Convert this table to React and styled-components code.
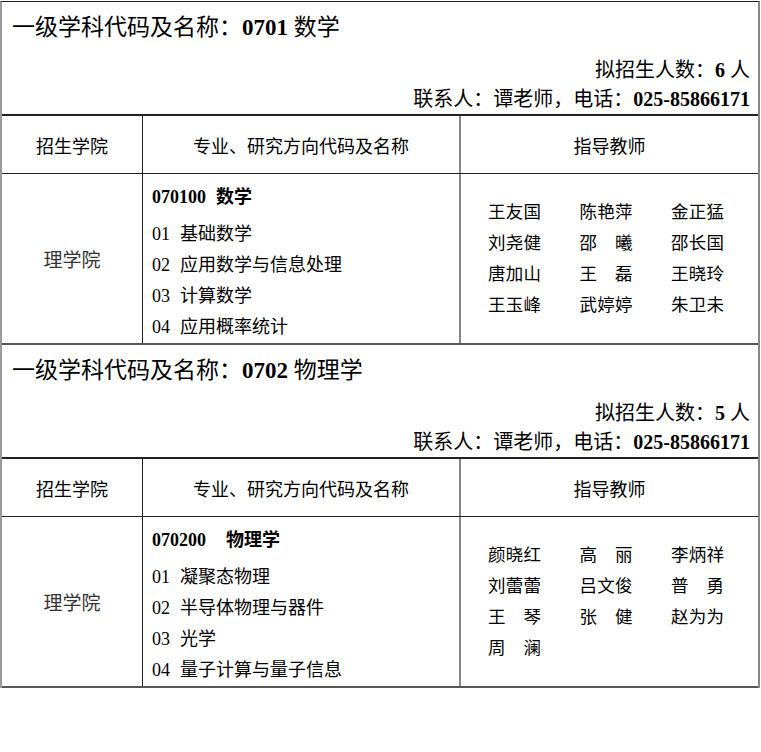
import styled, { createGlobalStyle } from 'styled-components'

const GlobalStyle = createGlobalStyle`
  body {
    margin: 0;
    background: #fff;
    color: #000;
    font-family: "Liberation Serif", "Noto Sans CJK SC", serif;
  }
`

const Sheet = styled.div`
  width: 760px;
  box-sizing: border-box;
  margin-top: 1px;
  border-top: 1px solid #222;
  border-left: 2px solid #9a9a9a;
  border-right: 2px solid #888;
`

const Head = styled.div`
  height: 112px;
  border-bottom: 2px solid #222;
  display: flex;
  flex-direction: column;
  justify-content: space-between;
  padding: 0 8px 0 10px;
`

const Title = styled.div`
  margin-top: 11px;
  font-size: 23px;
  line-height: 30px;
`

const Meta = styled.div`
  text-align: right;
  font-size: 20px;
  line-height: 29px;
`

const Num = styled.b`
  font-weight: 700;
`

const Row = styled.div`
  display: grid;
  grid-template-columns: 141px 318px 1fr;
  height: ${p => p.$height}px;
  border-bottom: ${p => p.$line}px solid ${p => p.$lineColor || '#222'};
`

const dividers = {
  dark: '1px solid #222',
  gray: '2px solid #888',
}

const Cell = styled.div`
  display: flex;
  align-items: center;
  justify-content: center;
  font-size: 18px;
  border-right: ${p => dividers[p.$divider] || 'none'};
`

const College = styled(Cell)`
  font-size: 19px;
  color: #333;
`

const Programs = styled.div`
  border-right: 2px solid #888;
  padding: 8px 0 0 9px;
  font-size: 18px;
`

const Major = styled.div`
  font-weight: 700;
  line-height: 30px;
  margin-bottom: 7px;
`

const MajorName = styled.span`
  margin-left: ${p => p.$gap}px;
`

const Direction = styled.div`
  line-height: 31px;
  display: flex;
`

const DirNo = styled.span`
  width: 28px;
`

const Teachers = styled.div`
  padding: 22.5px 0 0 27px;
  display: grid;
  grid-template-columns: repeat(3, 53px);
  column-gap: 38.5px;
  align-content: start;
  font-size: 17.5px;
  line-height: 31px;
`

const Name = styled.span`
  display: flex;
  justify-content: space-between;
`

const sections = [
  {
    code: '0701',
    name: '数学',
    quota: '6',
    major: { code: '070100', name: '数学', gap: 10 },
    directions: ['基础数学', '应用数学与信息处理', '计算数学', '应用概率统计'],
    teachers: ['王友国', '陈艳萍', '金正猛', '刘尧健', '邵曦', '邵长国', '唐加山', '王磊', '王晓玲', '王玉峰', '武婷婷', '朱卫未'],
  },
  {
    code: '0702',
    name: '物理学',
    quota: '5',
    major: { code: '070200', name: '物理学', gap: 20 },
    directions: ['凝聚态物理', '半导体物理与器件', '光学', '量子计算与量子信息'],
    teachers: ['颜晓红', '高丽', '李炳祥', '刘蕾蕾', '吕文俊', '普勇', '王琴', '张健', '赵为为', '周澜'],
  },
]

const Section = ({ s }) => (
  <>
    <Head>
      <Title>
        一级学科代码及名称：<Num>{s.code}</Num> {s.name}
      </Title>
      <div>
        <Meta>
          拟招生人数：<Num>{s.quota}</Num> 人
        </Meta>
        <Meta>
          联系人：谭老师，电话：<Num>025-85866171</Num>
        </Meta>
      </div>
    </Head>
    <Row $height={57} $line={1}>
      <Cell $divider="dark">招生学院</Cell>
      <Cell $divider="gray">专业、研究方向代码及名称</Cell>
      <Cell>指导教师</Cell>
    </Row>
    <Row $height={169} $line={2} $lineColor="#555">
      <College $divider="dark">理学院</College>
      <Programs>
        <Major>
          {s.major.code}
          <MajorName $gap={s.major.gap}>{s.major.name}</MajorName>
        </Major>
        {s.directions.map((d, i) => (
          <Direction key={d}>
            <DirNo>0{i + 1}</DirNo>
            {d}
          </Direction>
        ))}
      </Programs>
      <Teachers>
        {s.teachers.map(t => (
          <Name key={t}>
            {t.split('').map((c, i) => (
              <span key={i}>{c}</span>
            ))}
          </Name>
        ))}
      </Teachers>
    </Row>
  </>
)

export default function App() {
  return (
    <>
      <GlobalStyle />
      <Sheet>
        {sections.map(s => (
          <Section key={s.code} s={s} />
        ))}
      </Sheet>
    </>
  )
}
